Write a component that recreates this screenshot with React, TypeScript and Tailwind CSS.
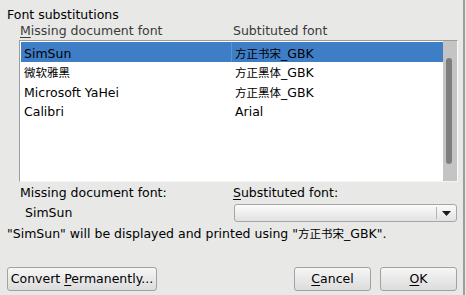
import React from "react";

// CJK glyphs render a touch smaller than the latin text in the reference
function Cjk({ children }: { children: React.ReactNode }) {
  return <span className="text-[11.5px]">{children}</span>;
}

const rows = [
  { key: "a", missing: "SimSun", sub: <><Cjk>方正书宋</Cjk>_GBK</>, selected: true },
  { key: "b", missing: <Cjk>微软雅黑</Cjk>, sub: <><Cjk>方正黑体</Cjk>_GBK</> },
  { key: "c", missing: "Microsoft YaHei", sub: <><Cjk>方正黑体</Cjk>_GBK</> },
  { key: "d", missing: "Calibri", sub: "Arial" },
];

function Mn({ children }: { children: React.ReactNode }) {
  return <span className="underline decoration-1 underline-offset-[2px]">{children}</span>;
}

function Button({ children, className = "" }: { children: React.ReactNode; className?: string }) {
  return (
    <div
      className={`h-[24px] flex items-center justify-center pb-[2px] rounded-[3px] border border-[#a2a2a2] bg-gradient-to-b from-[#f6f6f6] to-[#dcdcdc] ${className}`}
    >
      {children}
    </div>
  );
}

export default function App() {
  return (
    <div className="w-[466px] h-[295px] bg-[#e8e8e7] flex text-black text-[12.5px] leading-[15px] font-['DejaVu_Sans','Noto_Sans_CJK_SC',sans-serif]">
      <div className="w-[463px] flex flex-col pl-[7px] pr-[6px] pt-[7px] pb-[4px]">
        <div>Font substitutions</div>

        {/* column headers */}
        <div className="flex mt-[1px] pl-[13px] text-[#3a3a3a]">
          <div className="w-[213px]">
            <Mn>M</Mn>issing document font
          </div>
          <div>Subtituted font</div>
        </div>

        {/* list */}
        <div className="mt-[2px] ml-[12px] w-[439px] h-[142px] flex bg-white border border-t-[#9c9c9c] border-l-[#9c9c9c] border-r-[#f8f8f8] border-b-[#f4f4f4]">
          <div className="flex-1 pl-[1px] pt-[1px]">
            {rows.map((r) => (
              <div key={r.key} className={`flex h-[19.5px] ${r.selected ? "bg-[#3e7ec6]" : ""}`}>
                <div className="w-[210px] pl-[3px] pt-[3.5px]">{r.missing}</div>
                <div
                  className={`flex-1 pl-[3px] pt-[3.5px] border-l ${r.selected ? "border-[#5b93d2]" : "border-transparent"}`}
                >
                  {r.sub}
                </div>
              </div>
            ))}
          </div>
          <div className="w-[14px] bg-[#c4c4c4] pt-[17px] pl-[3px]">
            <div className="w-[6px] h-[106px] rounded-full bg-[#7e7e7e]" />
          </div>
        </div>

        {/* details */}
        <div className="flex mt-[3px] pl-[13px]">
          <div className="w-[213px]">
            <div>Missing document font:</div>
            <div className="mt-[5px] pl-[5px]">SimSun</div>
          </div>
          <div className="flex-1">
            <div>
              <Mn>S</Mn>ubstituted font:
            </div>
            <div className="mt-[4px] ml-[1px] h-[18px] flex rounded-[3px] border border-[#a6a6a6] bg-gradient-to-b from-[#fbfbfb] to-[#e2e2e2]">
              <div className="flex-1" />
              <div className="w-[20px] my-[2px] border-l border-[#b4b4b4] flex items-center justify-center">
                <svg width="9" height="5" viewBox="0 0 9 5">
                  <path d="M0 0 H9 L4.5 5 Z" fill="#1a1a1a" />
                </svg>
              </div>
            </div>
          </div>
        </div>

        <div className="mt-[3.5px]">
          "SimSun" will be displayed and printed using "<Cjk>方正书宋</Cjk>_GBK".
        </div>

        <div className="flex-1" />

        {/* buttons */}
        <div className="flex items-end">
          <Button className="w-[150px]">
            <span>
              Convert <Mn>P</Mn>ermanently...
            </span>
          </Button>
          <div className="flex-1" />
          <Button className="w-[77px]">
            <span>
              <Mn>C</Mn>ancel
            </span>
          </Button>
          <Button className="w-[77px] ml-[9px]">
            <span>
              <Mn>O</Mn>K
            </span>
          </Button>
        </div>
      </div>
      <div className="w-[2px] bg-[#9d9d9d]" />
    </div>
  );
}
